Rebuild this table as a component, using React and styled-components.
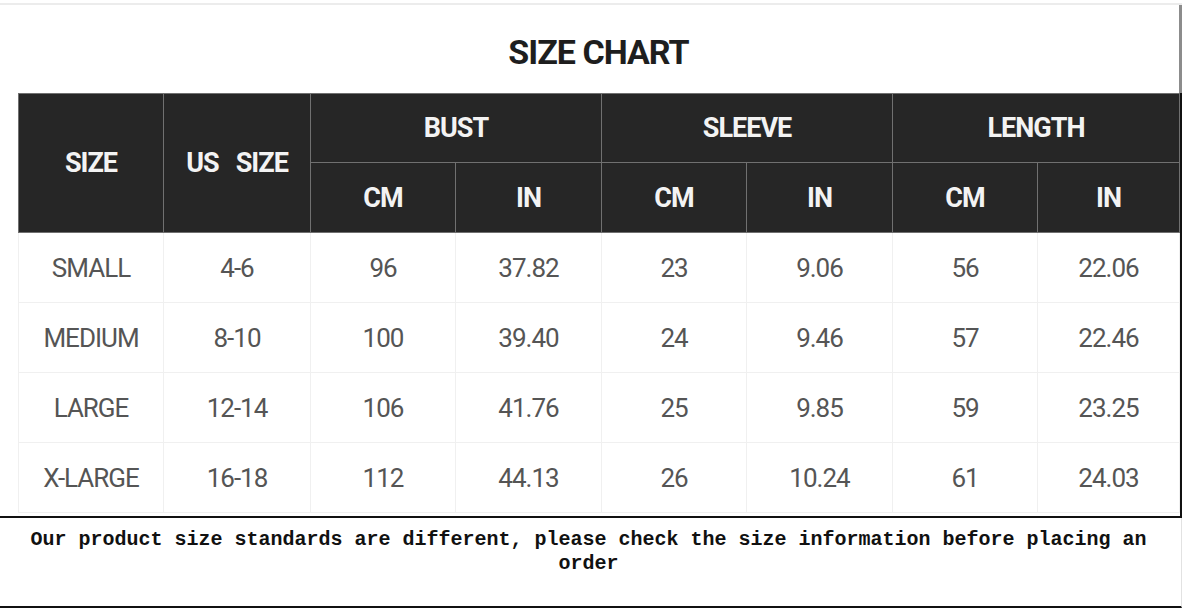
import React from "react";
import styled, { createGlobalStyle } from "styled-components";

const GlobalStyle = createGlobalStyle`
  body {
    margin: 0;
    background: #fff;
  }
`;

const Page = styled.div`
  width: 1186px;
  height: 611px;
  background: #fff;
  overflow: hidden;
`;

const ChartPanel = styled.div`
  width: 1182px;
  margin-top: 3px;
  border-top: 2px solid #ececec;
`;

const TitleBar = styled.div`
  height: 88px;
  display: flex;
  align-items: center;
  justify-content: center;
  border-right: 3px solid #8c8c8c;
  width: 1182px;
  box-sizing: border-box;
  padding-left: 18px;
`;

const Title = styled.h1`
  margin: 0;
  padding-top: 5px;
  font-family: Roboto, "Liberation Sans", sans-serif;
  font-weight: 700;
  font-size: 34px;
  letter-spacing: -1px;
  color: #1e1e1e;
`;

const TableArea = styled.div`
  width: 1182px;
  box-sizing: border-box;
  padding: 0 0 3px 18px;
  border-right: 2px solid #111;
  border-bottom: 2px solid #111;
`;

const Table = styled.table`
  width: 1161px;
  table-layout: fixed;
  border-collapse: collapse;
`;

const HeadCell = styled.th`
  height: ${(props) => props.h || 68}px;
  padding: 0;
  background: #262626;
  border: 1px solid #707070;
  color: #f3f3f3;
  font-family: Roboto, "Liberation Sans", sans-serif;
  font-weight: 700;
  font-size: 27px;
  letter-spacing: -1px;
  text-align: center;
  vertical-align: middle;
  white-space: pre;
`;

const Cell = styled.td`
  height: 69px;
  padding: 0;
  border: 1px solid #f0f0f0;
  color: #555;
  font-family: Roboto, "Liberation Sans", sans-serif;
  font-weight: 400;
  font-size: 26px;
  letter-spacing: -1px;
  text-align: center;
  vertical-align: middle;
`;

const Note = styled.div`
  width: 1182px;
  height: 90px;
  box-sizing: border-box;
  padding: 10px 24px 0 20px;
  border-bottom: 2px solid #111;
  border-right: 1px solid #e2e2e2;
  font-family: "Liberation Mono", "DejaVu Sans Mono", monospace;
  font-weight: 700;
  font-size: 20px;
  line-height: 24px;
  color: #111;
  text-align: center;
`;

const widths = [145, 147, 145, 146, 145, 146, 145, 142];

const rows = [
  ["SMALL", "4-6", "96", "37.82", "23", "9.06", "56", "22.06"],
  ["MEDIUM", "8-10", "100", "39.40", "24", "9.46", "57", "22.46"],
  ["LARGE", "12-14", "106", "41.76", "25", "9.85", "59", "23.25"],
  ["X-LARGE", "16-18", "112", "44.13", "26", "10.24", "61", "24.03"],
];

export default function App() {
  return (
    <Page>
      <GlobalStyle />
      <ChartPanel>
        <TitleBar>
          <Title>SIZE CHART</Title>
        </TitleBar>
        <TableArea>
          <Table>
            <colgroup>
              {widths.map((w, i) => (
                <col key={i} style={{ width: w }} />
              ))}
            </colgroup>
            <thead>
              <tr>
                <HeadCell rowSpan={2}>SIZE</HeadCell>
                <HeadCell rowSpan={2}>{"US   SIZE"}</HeadCell>
                <HeadCell colSpan={2}>BUST</HeadCell>
                <HeadCell colSpan={2}>SLEEVE</HeadCell>
                <HeadCell colSpan={2}>LENGTH</HeadCell>
              </tr>
              <tr>
                {["CM", "IN", "CM", "IN", "CM", "IN"].map((t, i) => (
                  <HeadCell key={i} h={69}>
                    {t}
                  </HeadCell>
                ))}
              </tr>
            </thead>
            <tbody>
              {rows.map((row) => (
                <tr key={row[0]}>
                  {row.map((v, i) => (
                    <Cell key={i}>{v}</Cell>
                  ))}
                </tr>
              ))}
            </tbody>
          </Table>
        </TableArea>
      </ChartPanel>
      <Note>
        Our product size standards are different, please check the size
        information before placing an order
      </Note>
    </Page>
  );
}
